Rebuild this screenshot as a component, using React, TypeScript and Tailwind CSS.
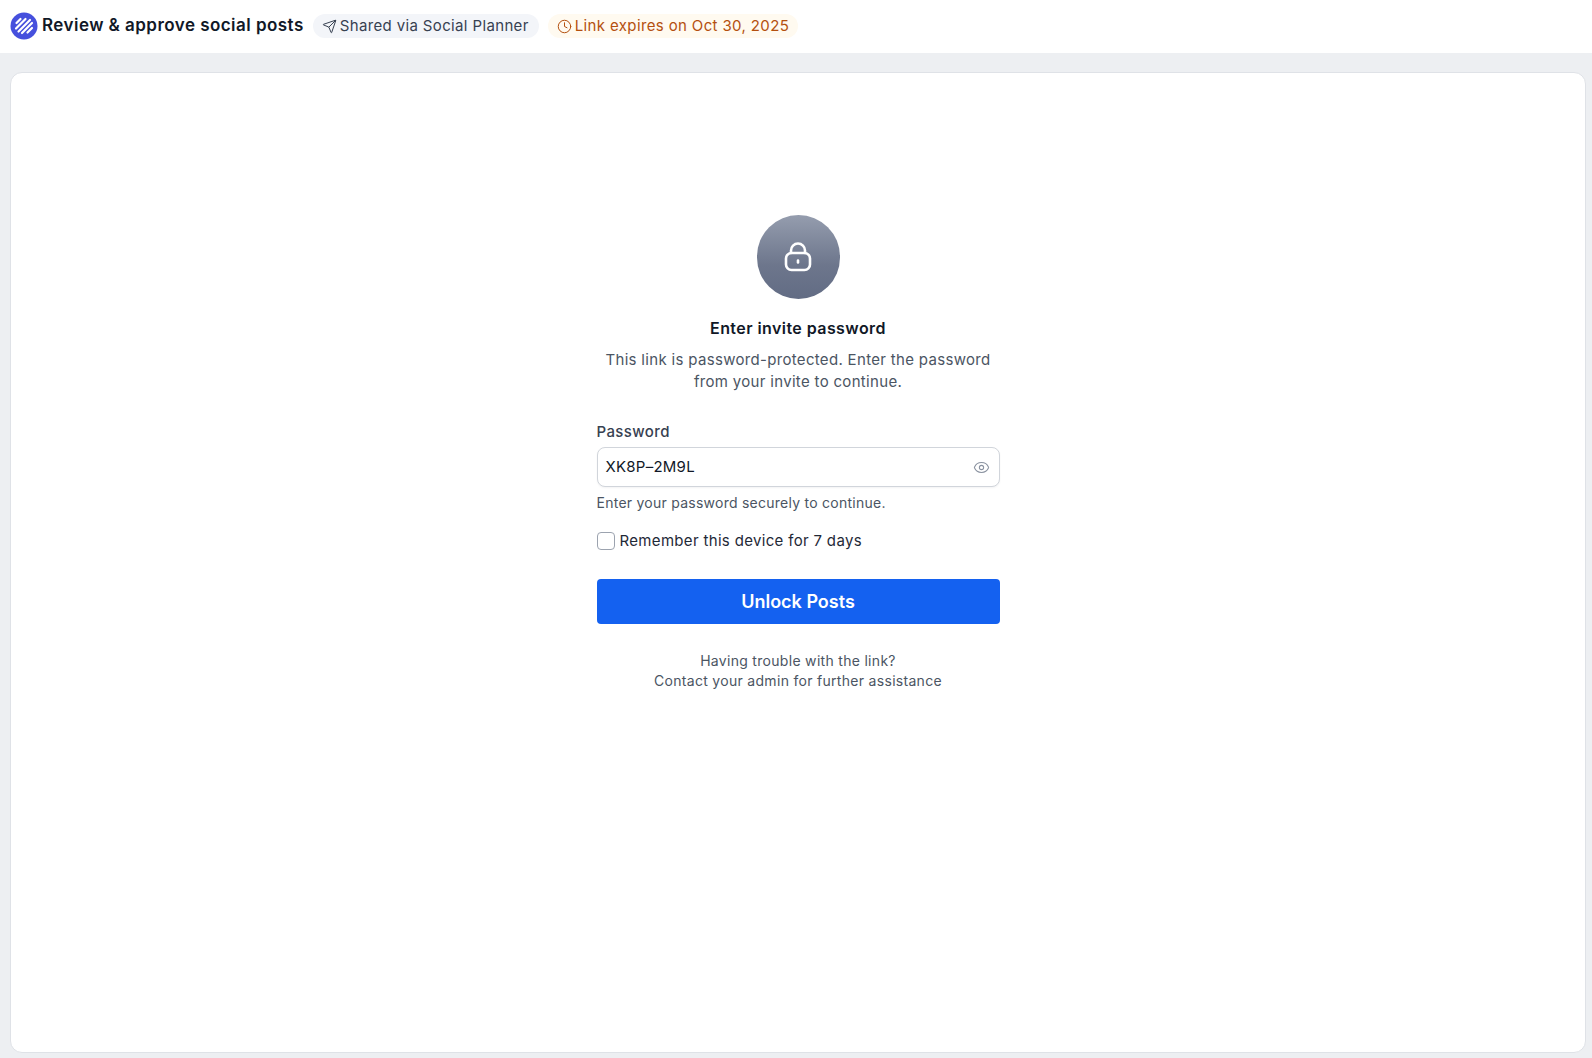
import { Clock, Eye, Send } from "lucide-react";

const Logo = () => (
  <svg width="28" height="28" viewBox="0 0 28 28" className="shrink-0">
    <circle cx="14" cy="14" r="13.5" fill="#4650dd" />
    <g stroke="#fff" strokeWidth="2.2" strokeLinecap="round">
      <path d="M6.5 11 10.5 7" />
      <path d="M6 16.5 15.5 7" />
      <path d="M8.5 19.5 20 8" />
      <path d="M12 21 22 11" />
      <path d="M17.5 20.5 22 16" />
    </g>
  </svg>
);

const LockIcon = () => (
  <svg width="28" height="30" viewBox="0 0 28 30" fill="none" stroke="currentColor" strokeWidth="2.6" strokeLinecap="round">
    <rect x="2" y="11" width="24" height="17" rx="5.5" />
    <path d="M7 11V8.5a7 7 0 0 1 14 0V11" />
    <path d="M14 18.5v2" />
  </svg>
);

const App = () => {
  return (
    <div className="h-[1058px] flex flex-col bg-[#edeff2] font-['Inter',sans-serif] tracking-[0.3px] overflow-hidden">
      {/* Top bar */}
      <div className="h-[53px] shrink-0 bg-white flex items-center pl-[10px] pb-[1px]">
        <Logo />
        <div className="ml-[4px] text-[17px] tracking-[0.46px] font-semibold text-[#111827]">Review &amp; approve social posts</div>
        <div className="ml-[9px] h-[24px] pl-[9px] pr-[10px] flex items-center gap-[3px] rounded-full bg-[#f3f5f9] text-[15px] tracking-[0.36px] text-[#374151]">
          <Send size={15} strokeWidth={1.6} />
          <span>Shared via Social Planner</span>
        </div>
        <div className="ml-[9px] h-[24px] px-[9px] flex items-center gap-[3px] rounded-full bg-[#fffaf0] text-[15px] tracking-[0.37px] text-[#b4500f]">
          <Clock size={15} strokeWidth={1.6} />
          <span>Link expires on Oct 30, 2025</span>
        </div>
      </div>

      {/* Card */}
      <div className="mt-[19px] ml-[10px] mr-[6px] h-[981px] bg-white rounded-[12px] border border-[#dfe2e7] flex flex-col items-center pt-[142px]">
        <div className="w-[83px] h-[84px] rounded-full bg-gradient-to-b from-[#959dae] via-[#6d768c] via-60% to-[#626c84] flex items-center justify-center text-white">
          <LockIcon />
        </div>
        <div className="mt-[17px] text-[16px] leading-[24px] tracking-[0.43px] font-semibold text-[#111827]">Enter invite password</div>
        <div className="mt-[9px] w-[404px] text-center text-[15px] leading-[22px] tracking-[0.32px] text-[#4b5563]">
          This link is password-protected. Enter the password
          <br />
          from your invite to continue.
        </div>

        <div className="mt-[28px] w-[403px] flex flex-col">
          <div className="text-[15px] leading-[22px] tracking-[0.38px] font-medium text-[#374151]">Password</div>
          <div className="mt-[4px] h-[40px] rounded-[8px] border border-[#d1d5db] bg-white flex items-center justify-between pl-[8px] pr-[9px] shadow-[0_1px_2px_rgba(16,24,40,0.05)]">
            <span className="text-[15px] tracking-[0.25px] text-[#111827]">XK8P–2M9L</span>
            <Eye size={17} strokeWidth={1.5} className="text-[#8b93a1]" />
          </div>
          <div className="mt-[6px] text-[14px] leading-[20px] tracking-[0.25px] text-[#4b5563]">Enter your password securely to continue.</div>
          <div className="mt-[17px] flex items-center gap-[5px]">
            <div className="w-[18px] h-[18px] rounded-[4px] border border-[#9ca3af] bg-white" />
            <span className="text-[15px] leading-[22px] tracking-[0.33px] text-[#1f2937]">Remember this device for 7 days</span>
          </div>
          <button className="mt-[27px] h-[45px] rounded-[4px] bg-[#1461f0] text-white text-[18px] tracking-normal font-semibold">Unlock Posts</button>
          <div className="mt-[27px] text-center text-[14px] leading-[20px] tracking-[0.3px] text-[#4b5563]">
            Having trouble with the link?
            <br />
            Contact your admin for further assistance
          </div>
        </div>
      </div>
    </div>
  );
};

export default App;
